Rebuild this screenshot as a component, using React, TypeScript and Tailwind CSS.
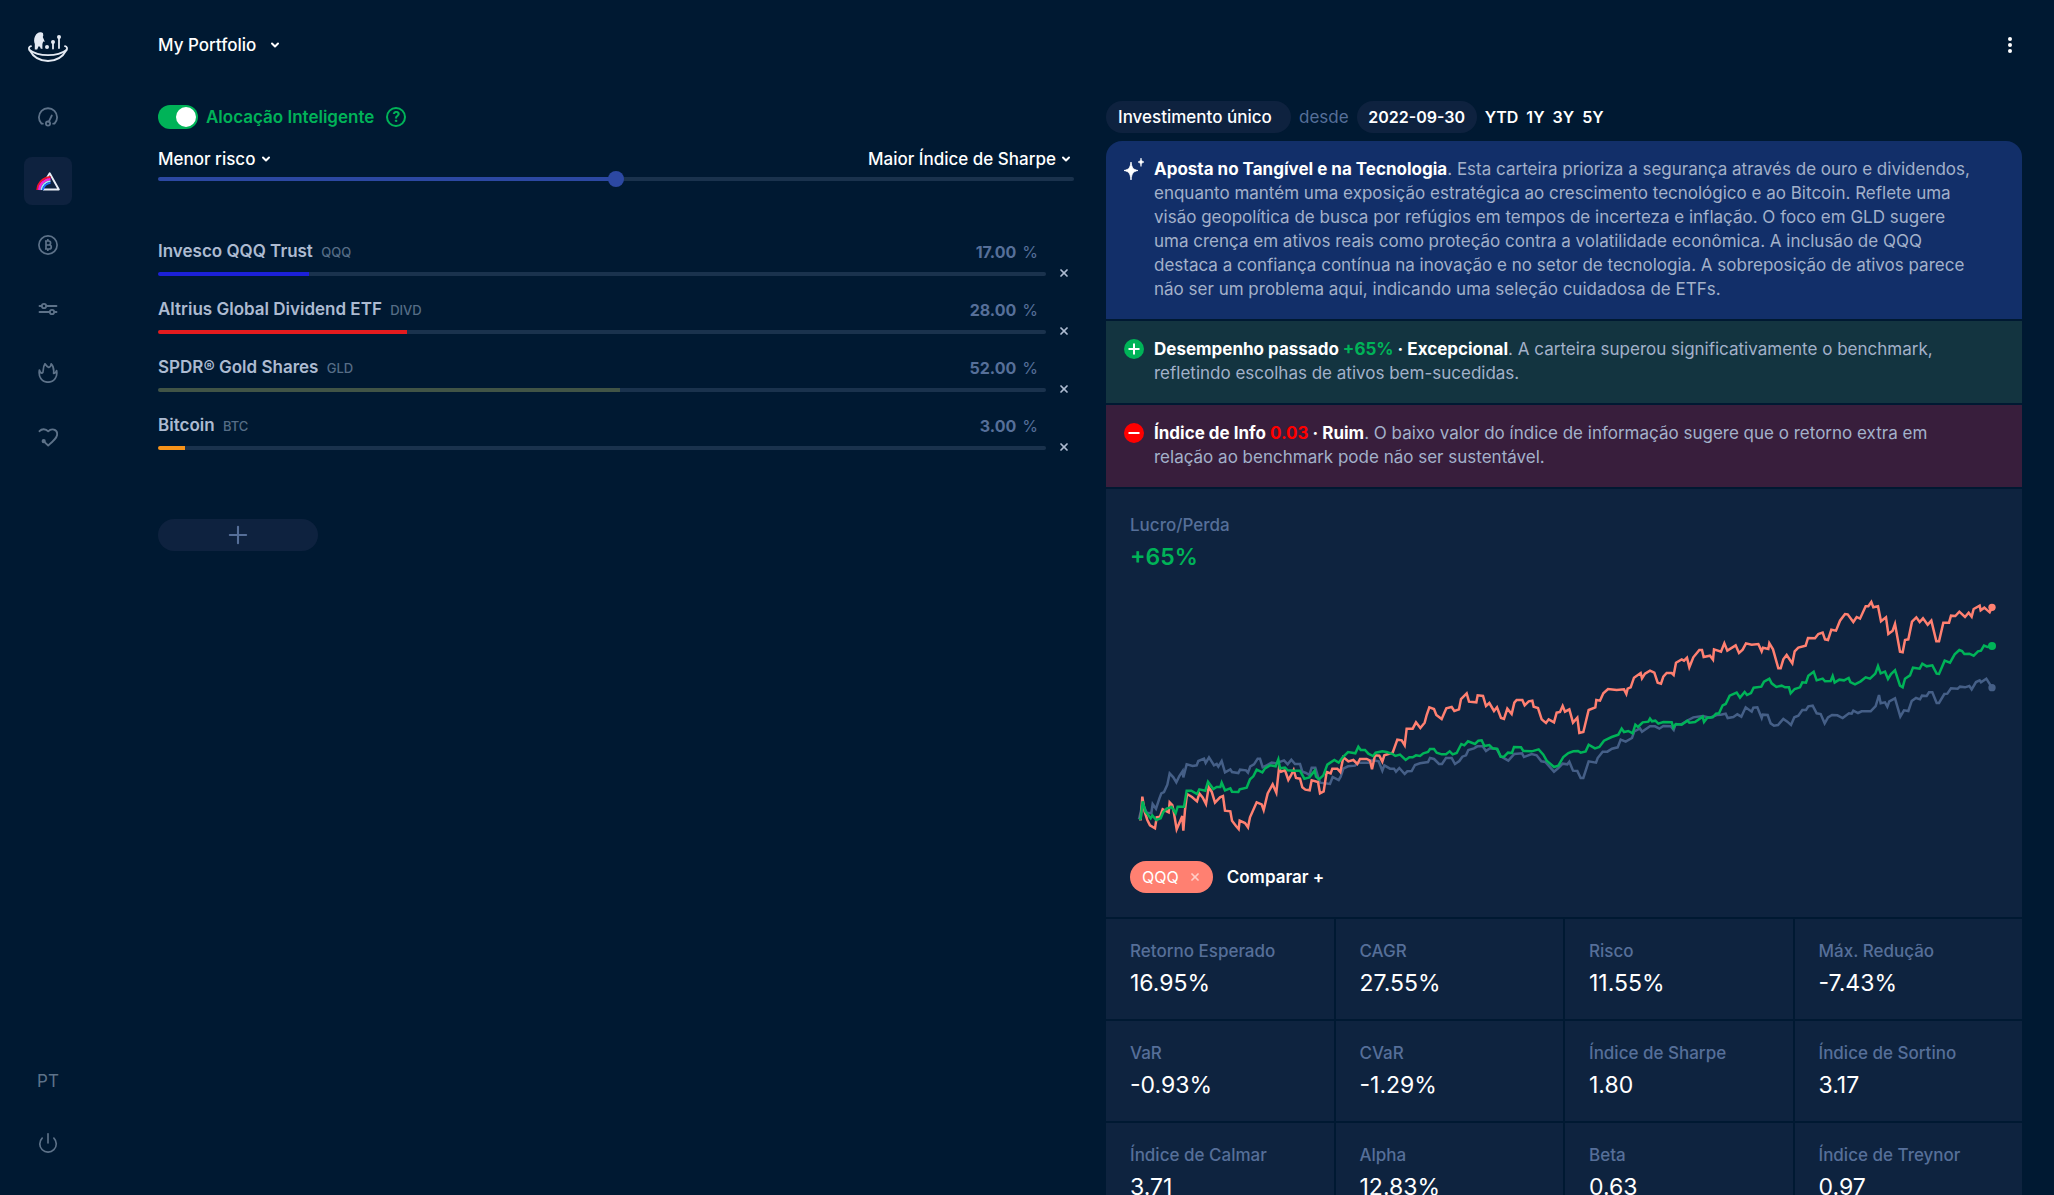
import React, { useState } from 'react';
import { ChevronDown, Plus, Power, X } from 'lucide-react';

interface Holding {
  name: string;
  ticker: string;
  weight: number;
  color: string;
}

interface Insight {
  tone: string;
  icon: React.ReactNode;
  title: React.ReactNode;
  text: string;
}

const INITIAL_HOLDINGS: Holding[] = [
  { name: 'Invesco QQQ Trust', ticker: 'QQQ', weight: 17, color: '#1c20d8' },
  { name: 'Altrius Global Dividend ETF', ticker: 'DIVD', weight: 28, color: '#e31b1e' },
  { name: 'SPDR® Gold Shares', ticker: 'GLD', weight: 52, color: '#415446' },
  { name: 'Bitcoin', ticker: 'BTC', weight: 3, color: '#f7931a' },
];

const METRICS = [
  { label: 'Retorno Esperado', value: '16.95%' },
  { label: 'CAGR', value: '27.55%' },
  { label: 'Risco', value: '11.55%' },
  { label: 'Máx. Redução', value: '-7.43%' },
  { label: 'VaR', value: '-0.93%' },
  { label: 'CVaR', value: '-1.29%' },
  { label: 'Índice de Sharpe', value: '1.80' },
  { label: 'Índice de Sortino', value: '3.17' },
  { label: 'Índice de Calmar', value: '3.71' },
  { label: 'Alpha', value: '12.83%' },
  { label: 'Beta', value: '0.63' },
  { label: 'Índice de Treynor', value: '0.97' },
];

// Chart series, weekly closes
const QQQ_LINE =
  '57,718 62,718 67,650 74,695 82,720 90,736 105,745 110,712 120,710 128,688 146,697 149,667 157,675 162,700 170,748 187,708 190,752 195,690 201,642 216,651 231,664 238,640 248,652 258,672 266,622 275,635 285,668 300,652 309,648 315,692 331,694 336,722 348,738 356,747 359,722 375,729 384,742 390,712 410,667 425,673 431,690 443,640 458,613 469,638 477,565 483,575 495,571 505,600 512,588 521,570 528,594 540,596 547,622 556,629 569,631 575,601 594,606 600,640 611,634 620,576 632,580 637,566 652,566 661,576 670,532 685,544 700,540 712,552 720,537 740,537 750,542 756,568 765,526 778,527 787,545 793,526 818,518 832,479 845,481 854,496 860,446 878,446 888,427 901,444 914,428 920,405 928,382 942,387 949,405 965,417 979,385 995,381 1003,393 1017,388 1023,357 1040,340 1047,365 1069,367 1073,346 1089,348 1098,378 1108,369 1122,393 1131,382 1143,414 1152,417 1162,386 1175,402 1183,368 1190,360 1207,360 1214,376 1226,364 1237,362 1241,380 1254,384 1265,418 1278,429 1286,418 1302,427 1310,398 1320,396 1328,378 1335,395 1348,388 1359,428 1372,413 1378,459 1390,456 1406,390 1426,382 1429,360 1440,362 1450,340 1464,327 1490,330 1512,328 1519,342 1523,326 1532,322 1542,293 1562,279 1566,295 1575,281 1590,272 1603,278 1613,308 1623,311 1630,290 1640,279 1655,279 1661,285 1668,248 1685,238 1692,242 1701,233 1708,262 1720,232 1738,210 1746,210 1751,231 1770,227 1779,239 1782,208 1803,215 1813,190 1822,212 1847,196 1857,219 1868,209 1878,190 1895,194 1915,192 1925,214 1929,203 1945,207 1948,190 1959,208 1975,265 1982,265 1990,238 2000,225 2017,250 2024,214 2035,203 2057,197 2064,174 2085,175 2095,162 2108,158 2115,178 2124,180 2134,149 2148,152 2160,122 2175,102 2183,103 2200,126 2210,111 2220,116 2237,79 2245,79 2254,66 2260,82 2274,79 2283,124 2298,112 2305,162 2318,152 2325,132 2340,215 2348,217 2355,180 2365,178 2376,125 2389,112 2399,126 2409,115 2423,134 2434,122 2449,184 2457,184 2470,128 2487,128 2493,107 2506,108 2518,95 2535,111 2546,98 2555,110 2561,87 2579,77 2582,91 2593,83 2609,97 2616,82';
const PORTFOLIO_LINE =
  '57,718 62,716 68,664 76,694 92,715 97,706 109,720 122,715 130,696 140,686 155,681 167,700 173,680 192,680 200,632 214,632 231,642 238,628 256,632 264,605 280,627 290,621 301,621 305,608 315,631 331,625 336,635 355,636 359,628 380,623 390,598 400,589 410,569 427,577 435,565 450,556 467,559 475,538 480,565 495,563 503,571 520,572 540,572 553,596 568,592 584,572 588,590 597,598 610,586 622,554 643,540 656,548 668,532 684,516 706,520 715,500 722,510 735,510 745,521 759,528 767,518 787,514 800,516 818,522 826,528 840,524 857,540 868,532 878,532 888,526 900,528 910,520 924,516 930,507 942,507 950,518 965,523 978,523 989,514 998,523 1010,519 1024,492 1033,496 1044,484 1065,492 1075,482 1085,481 1093,498 1108,495 1118,505 1132,507 1142,530 1152,530 1164,518 1176,519 1182,501 1203,502 1210,513 1235,514 1256,508 1270,524 1280,542 1302,561 1315,557 1330,531 1345,519 1360,514 1374,513 1382,518 1397,514 1406,494 1425,505 1438,501 1452,482 1475,471 1495,464 1505,446 1512,456 1525,453 1538,460 1546,434 1554,441 1568,427 1585,425 1590,416 1596,424 1606,422 1615,431 1630,426 1655,427 1660,443 1668,432 1685,434 1702,422 1708,428 1725,426 1748,410 1752,426 1762,413 1778,412 1788,401 1797,400 1808,376 1817,372 1829,347 1850,338 1860,353 1874,336 1881,345 1893,339 1901,323 1924,320 1932,305 1948,296 1955,310 1969,321 1985,317 1995,322 2007,322 2012,340 2024,327 2040,322 2047,307 2058,308 2065,287 2081,275 2090,301 2108,296 2115,304 2132,303 2138,288 2144,308 2158,299 2172,301 2186,294 2191,306 2205,313 2222,304 2237,292 2250,296 2266,281 2274,258 2282,280 2295,275 2304,297 2313,282 2325,271 2340,317 2348,322 2355,296 2370,286 2379,263 2399,266 2407,251 2420,259 2437,256 2450,281 2457,282 2474,242 2490,248 2504,223 2518,210 2526,213 2533,222 2548,221 2561,227 2574,214 2583,212 2592,197 2602,201 2616,198';
const BENCHMARK_LINE =
  '57,718 68,670 80,698 94,700 98,672 108,686 118,656 124,640 132,636 142,614 149,580 160,592 169,607 178,588 188,573 190,592 200,553 218,558 230,556 235,543 252,536 257,549 267,532 282,556 290,552 295,560 305,543 315,577 331,568 336,576 355,579 360,569 378,571 384,578 391,559 402,553 413,536 420,536 428,562 440,556 455,548 467,550 492,541 503,553 514,539 525,552 540,552 547,575 558,579 568,585 575,563 586,563 594,590 600,608 630,612 638,591 656,600 662,590 670,566 684,559 705,557 715,548 745,548 757,540 776,544 787,572 793,556 810,566 822,566 828,575 838,564 854,582 862,574 875,573 885,555 900,550 924,546 930,534 942,537 957,552 966,552 978,534 995,534 1005,552 1018,543 1027,530 1038,526 1045,510 1062,505 1072,499 1088,499 1098,513 1110,505 1130,507 1142,529 1165,542 1183,522 1206,520 1212,531 1235,522 1250,526 1264,544 1276,546 1302,575 1315,564 1328,551 1342,553 1348,545 1359,572 1372,573 1382,594 1390,594 1406,544 1428,548 1433,534 1448,515 1462,515 1476,506 1493,502 1502,479 1517,485 1536,474 1543,454 1560,445 1566,455 1590,439 1605,439 1618,446 1630,438 1652,439 1661,450 1666,434 1685,432 1705,420 1720,412 1748,408 1770,413 1790,405 1802,404 1817,401 1823,414 1840,411 1852,403 1864,410 1877,382 1895,395 1900,383 1912,382 1925,414 1928,404 1943,405 1952,430 1962,437 1974,435 1990,417 2002,425 2013,435 2023,412 2035,407 2047,390 2058,390 2065,379 2078,377 2090,400 2102,402 2114,430 2124,412 2136,405 2152,406 2168,414 2187,400 2195,401 2200,392 2214,399 2225,394 2252,394 2267,378 2277,345 2282,370 2295,367 2302,380 2308,364 2325,355 2341,410 2352,391 2365,393 2375,363 2388,354 2400,358 2406,347 2420,348 2427,337 2437,337 2450,369 2457,369 2473,342 2482,341 2493,325 2513,326 2520,320 2535,322 2548,318 2555,328 2568,306 2579,301 2583,307 2599,296 2616,323';

const LogoIcon = () => (
  <svg width="40" height="30" viewBox="0 0 40 30" fill="none" stroke="#e4eaf3" strokeLinecap="round" strokeLinejoin="round">
    <path d="M3 14.2C1 14.6.4 16.4 1.5 18C5 24.5 11.5 29 20 29s15-4.500 18.500-11c1-1.600.5-3.400-1.500-3.800" strokeWidth="1.800" />
    <path d="M1.500 18C6 21.500 12 23.200 20 23.200s14-1.700 18.500-5.200" strokeWidth="1.800" />
    <path d="M6.800 17.500V12C5.200 8.500 6.500 3 9.800 1C10.800-.1 14 0 15 1.200L15.300 3.500L14.800 5L16.800 9.800L15.200 9.400L14.400 12V17L12.600 16.400L12 14.800L10.600 14.200L9.200 17.500z" fill="#e4eaf3" stroke="none" />
    <circle cx="19" cy="15" r="2" fill="#e4eaf3" stroke="none" />
    <circle cx="25" cy="10" r="2" fill="#e4eaf3" stroke="none" />
    <circle cx="31" cy="5" r="2" fill="#e4eaf3" stroke="none" />
    <path d="M25 10v6.500M31 5v11" strokeWidth="1.800" />
  </svg>
);

const GaugeIcon = () => (
  <svg width="20" height="20" viewBox="0 0 20 20" fill="none" stroke="currentColor" strokeWidth="1.800" strokeLinecap="round">
    <path d="M4.800 16.700H3.500A9.100 9.100 0 1 1 16.500 16.700H15.200" />
    <circle cx="10" cy="16.600" r="2.100" />
    <path d="M10.800 14.600L13.800 8.500" />
  </svg>
);

const PrismIcon = () => (
  <svg width="24" height="20" viewBox="0 0 24 20" fill="none">
    <path d="M10.800 7L13.700 2.200L22.800 18.500H7" stroke="#e9eef6" strokeWidth="1.900" strokeLinejoin="round" />
    <path d="M1.200 19C1.800 11.500 7 6.500 14.500 6" stroke="#f5122b" strokeWidth="1.800" />
    <path d="M3.200 19C3.800 12.800 8.300 8.600 14.500 8" stroke="#f224dc" strokeWidth="2.600" />
    <path d="M5.300 19C6 14.200 9.300 10.800 14.500 10.200" stroke="#9de4fb" strokeWidth="1.800" />
    <path d="M6.900 19C7.600 15.200 10.600 12.400 14.500 11.800" stroke="#1d6fff" strokeWidth="1.800" />
  </svg>
);

const CoinIcon = () => (
  <svg width="20" height="20" viewBox="0 0 20 20" fill="none" stroke="currentColor" strokeWidth="1.700">
    <circle cx="10" cy="10" r="9.100" />
    <path d="M8 6v8h3.200c2.800 0 2.800-4 0-4H8.500h2.200c2.500 0 2.500-4 0-4H7M7 14h2M9.800 4v2M9.800 14v2" />
  </svg>
);

const SlidersIcon = () => (
  <svg width="20" height="20" viewBox="0 0 20 20" fill="none" stroke="currentColor" strokeWidth="1.800" strokeLinecap="round">
    <path d="M1.500 7h2M8.500 7h10M1.500 13h10M16.500 13h2" />
    <circle cx="6" cy="7" r="2.200" />
    <circle cx="14" cy="13" r="2.200" />
  </svg>
);

const FlameIcon = () => (
  <svg width="20" height="20" viewBox="0 0 20 20" fill="none" stroke="currentColor" strokeWidth="1.700" strokeLinejoin="round">
    <path d="M1.400 7C.2 13.500 3.500 19.200 10 19.200S19.800 13.500 18.600 7.500C18 9.500 17 10.300 15.600 10.300C16 6.500 15.500 3 13.200.8C13 3 12 4 10.800 4.500C9.500 3.800 8 2.500 7 .8C5.500 3 5.300 5 5.200 7.500C5.200 9 4.800 10 4 10.200C2.600 10 1.800 9 1.400 7z" />
  </svg>
);

const HeartIcon = () => (
  <svg width="20" height="20" viewBox="0 0 20 20" fill="none" stroke="currentColor" strokeWidth="1.800" strokeLinecap="round" strokeLinejoin="round">
    <path d="M1.500 4.200C3.800 1.500 7.800 1.600 10.200 4.400C13.500.8 19.200 2.500 19.200 7C19.200 11 15 14.500 10.200 18.500L6 14.600" />
    <circle cx="5.700" cy="14.200" r="1.200" fill="currentColor" />
  </svg>
);

const SparkleIcon = () => (
  <svg className="shrink-0" width="20" height="24" viewBox="0 0 20 24" fill="#fff">
    <path d="M7 5C7.900 11 9 12.500 14 13.500C9 14.500 7.900 16 7 23C6.100 16 5 14.500 0 13.500C5 12.500 6.100 11 7 5z" stroke="#fff" strokeWidth=".8" />
    <path d="M17 1C17.500 3.700 18 4.500 20 5C18 5.500 17.500 6.300 17 9.500C16.500 6.300 16 5.500 14 5C16 4.500 16.500 3.700 17 1z" stroke="#fff" strokeWidth=".6" />
  </svg>
);

const BadgeIcon: React.FC<{ positive?: boolean }> = ({ positive }) => (
  <svg className="mt-0.5 shrink-0" width="20" height="20" viewBox="0 0 20 20">
    <circle cx="10" cy="10" r="10" fill={positive ? '#00b358' : '#ff0000'} />
    <path d={positive ? 'M4.500 10h11M10 4.500v11' : 'M4.500 10h11'} stroke="#fff" strokeWidth="2" />
  </svg>
);

const NAV = [
  { label: 'Painel', icon: <GaugeIcon /> },
  { label: 'Portfolio', icon: <PrismIcon />, active: true },
  { label: 'Cripto', icon: <CoinIcon /> },
  { label: 'Ajustes', icon: <SlidersIcon /> },
  { label: 'Tendências', icon: <FlameIcon /> },
  { label: 'Favoritos', icon: <HeartIcon /> },
];

const INSIGHTS: Insight[] = [
  {
    tone: 'bg-[#122f69]',
    icon: <SparkleIcon />,
    title: 'Aposta no Tangível e na Tecnologia',
    text: `Esta carteira prioriza a segurança através de ouro e dividendos,
enquanto mantém uma exposição estratégica ao crescimento tecnológico e ao Bitcoin. Reflete uma
visão geopolítica de busca por refúgios em tempos de incerteza e inflação. O foco em GLD sugere
uma crença em ativos reais como proteção contra a volatilidade econômica. A inclusão de QQQ
destaca a confiança contínua na inovação e no setor de tecnologia. A sobreposição de ativos parece
não ser um problema aqui, indicando uma seleção cuidadosa de ETFs.`,
  },
  {
    tone: 'bg-[#133440]',
    icon: <BadgeIcon positive />,
    title: <>Desempenho passado <span className="text-[#00b358]">+65%</span> · Excepcional</>,
    text: `A carteira superou significativamente o benchmark,
refletindo escolhas de ativos bem-sucedidas.`,
  },
  {
    tone: 'bg-[#381e3c]',
    icon: <BadgeIcon />,
    title: <>Índice de Info <span className="text-[#ff0000]">0.03</span> · Ruim</>,
    text: `O baixo valor do índice de informação sugere que o retorno extra em
relação ao benchmark pode não ser sustentável.`,
  },
];

const Sidebar = () => (
  <aside className="flex h-screen w-24 shrink-0 flex-col items-center pb-7 pt-8 text-[#5d7289]">
    <a href="#home" aria-label="Início"><LogoIcon /></a>
    <nav className="mt-[31px] flex flex-col gap-4">
      {NAV.map(item => (
        <a
          key={item.label}
          href={`#${item.label}`}
          aria-label={item.label}
          className={`flex h-12 w-12 items-center justify-center rounded-lg ${item.active ? 'bg-[#0e223f]' : ''}`}
        >
          {item.icon}
        </a>
      ))}
    </nav>
    <div className="mt-auto flex flex-col items-center gap-3.5">
      <button className="h-12 w-12">PT</button>
      <button aria-label="Sair" className="flex h-12 w-12 items-center justify-center"><Power size={22} strokeWidth={1.800} /></button>
    </div>
  </aside>
);

const Picker: React.FC<{ label: string; value: string; gap?: string }> = ({ label, value, gap = 'gap-1' }) => (
  <label className={`flex items-center font-medium text-white ${gap}`}>
    <select aria-label={label} className="appearance-none bg-transparent outline-none">
      <option>{value}</option>
    </select>
    <ChevronDown size={12} strokeWidth={4} />
  </label>
);

const HoldingRow: React.FC<{ holding: Holding; onChange: (weight: number) => void; onRemove: () => void }> = ({ holding, onChange, onRemove }) => {
  const fill = `linear-gradient(to right, ${holding.color} ${holding.weight}%, #1a324d ${holding.weight}%)`;

  return (
    <li className="flex h-[58px] items-start gap-2">
      <div className="flex grow flex-col gap-2">
        <div className="flex items-center justify-between pr-2">
          <label htmlFor={holding.ticker} className="font-semibold text-[#adbbd1]">
            {holding.name} <span className="ml-1 text-[13px] font-medium text-[#566d86]">{holding.ticker}</span>
          </label>
          <span className="flex gap-1.5 text-base text-[#566f99]"><b>{holding.weight.toFixed(2)}</b> <span>%</span></span>
        </div>
        <input
          id={holding.ticker}
          type="range"
          value={holding.weight}
          onChange={e => onChange(Number(e.target.value))}
          className="h-1 w-full appearance-none rounded-full [&::-webkit-slider-thumb]:w-0 [&::-webkit-slider-thumb]:appearance-none"
          style={{ background: fill }}
        />
      </div>
      <button aria-label={`Remover ${holding.name}`} onClick={onRemove} className="mt-6 p-1 text-[#adbbd1]">
        <X size={12} strokeWidth={3.500} />
      </button>
    </li>
  );
};

const Chart = () => (
  <svg className="block w-full" viewBox="30 -21 2604 864" fill="none" strokeWidth="7.500" role="img" aria-label="Lucro/Perda">
    <polyline points={BENCHMARK_LINE} stroke="#455f87" />
    <circle cx="2616" cy="323" r="11" fill="#455f87" />
    <polyline points={QQQ_LINE} stroke="#ff8071" />
    <circle cx="2616" cy="82" r="11" fill="#ff8071" />
    <polyline points={PORTFOLIO_LINE} stroke="#00b358" />
    <circle cx="2616" cy="198" r="12" fill="#00b358" />
  </svg>
);

const App: React.FC = () => {
  const [holdings, setHoldings] = useState(INITIAL_HOLDINGS);
  const [balance, setBalance] = useState(50);

  const setWeight = (ticker: string, weight: number) =>
    setHoldings(prev => prev.map(h => (h.ticker === ticker ? { ...h, weight } : h)));

  return (
    <div className="flex h-screen overflow-hidden bg-[#001932] font-['Inter',sans-serif] text-[17px] leading-6">
      <Sidebar />

      <div className="flex grow flex-col pl-[62px] pr-8">
        <header className="flex h-[90px] shrink-0 items-center justify-between">
          <Picker label="Carteira" value="My Portfolio" gap="gap-3" />
          <button aria-label="Mais opções" className="flex flex-col items-center gap-0.5 px-2.5">
            <span className="h-1 w-1 rounded-full bg-white" />
            <span className="h-1 w-1 rounded-full bg-white" />
            <span className="h-1 w-1 rounded-full bg-white" />
          </button>
        </header>

        <main className="grid grid-cols-2 gap-8 pt-[11px]">
          {/* Allocation */}
          <section>
            <div className="flex h-8 items-center gap-2 font-semibold text-[#00b358]">
              <input
                id="smart"
                type="checkbox"
                role="switch"
                defaultChecked
                className="h-6 w-10 appearance-none rounded-full bg-[#1a324d] p-0.5 before:block before:h-5 before:w-5 before:rounded-full before:bg-white checked:bg-[#00b358] checked:pl-[18px]"
              />
              <label htmlFor="smart">Alocação Inteligente</label>
              <button aria-label="Ajuda" className="ml-1 h-5 w-5 rounded-full border-2 border-[#00b358] text-sm font-bold leading-4">?</button>
            </div>

            <div className="mt-3.5 flex justify-between pr-0.5">
              <Picker label="Objetivo mínimo" value="Menor risco" />
              <Picker label="Objetivo máximo" value="Maior Índice de Sharpe" />
            </div>
            <input
              type="range"
              aria-label="Equilíbrio"
              value={balance}
              onChange={e => setBalance(Number(e.target.value))}
              className="mt-1.5 block h-1 w-full appearance-none rounded-full [&::-webkit-slider-thumb]:h-4 [&::-webkit-slider-thumb]:w-4 [&::-webkit-slider-thumb]:appearance-none [&::-webkit-slider-thumb]:rounded-full [&::-webkit-slider-thumb]:bg-[#2c48a2]"
              style={{ background: `linear-gradient(to right, #2c48a2 ${balance}%, #1a324d ${balance}%)` }}
            />

            <ul className="mt-[58px]">
              {holdings.map(h => (
                <HoldingRow
                  key={h.ticker}
                  holding={h}
                  onChange={weight => setWeight(h.ticker, weight)}
                  onRemove={() => setHoldings(prev => prev.filter(p => p.ticker !== h.ticker))}
                />
              ))}
            </ul>

            <button aria-label="Adicionar ativo" className="mt-12 flex h-8 w-40 items-center justify-center rounded-full bg-[#0e223f] text-[#566f99]">
              <Plus size={28} strokeWidth={1.800} />
            </button>
          </section>

          {/* Results */}
          <section>
            <div className="flex h-8 items-center gap-2 font-medium text-white">
              <select aria-label="Tipo de investimento" className="h-8 w-[185px] appearance-none rounded-full bg-[#0e223f] px-3">
                <option>Investimento único</option>
              </select>
              <label htmlFor="since" className="font-normal text-[#566f99]">desde</label>
              <input id="since" defaultValue="2022-09-30" className="h-8 w-[120px] rounded-full bg-[#0e223f] text-center text-base font-semibold" />
              {['YTD', '1Y', '3Y', '5Y'].map(period => (
                <button key={period} className="text-base font-semibold">{period}</button>
              ))}
            </div>

            <div className="mt-2 flex flex-col gap-0.5 overflow-hidden rounded-t-2xl">
              {INSIGHTS.map(item => (
                <div key={item.tone} className={`flex gap-2.5 pb-[18px] pl-[18px] pr-5 pt-4 ${item.tone}`}>
                  {item.icon}
                  <p className="whitespace-pre-line text-[#a3b1ca]"><b className="font-bold text-white">{item.title}</b>. {item.text}</p>
                </div>
              ))}

              <div className="bg-[#0e233f] p-6">
                <h2 className="font-medium text-[#566f99]">Lucro/Perda</h2>
                <div className="mt-1 text-[23px] font-semibold leading-8 text-[#00b358]">+65%</div>
                <Chart />
                <div className="flex items-center gap-3.5 text-white">
                  <button className="flex h-8 items-center gap-2.5 rounded-full bg-[#ff8071] px-3 text-base">
                    QQQ <X size={12} strokeWidth={3.500} className="opacity-60" />
                  </button>
                  <button className="font-semibold">Comparar +</button>
                </div>
              </div>

              <dl className="grid grid-cols-4 gap-0.5">
                {METRICS.map(m => (
                  <div key={m.label} className="bg-[#0e233f] px-6 py-5">
                    <dt className="font-medium text-[#566f99]">{m.label}</dt>
                    <dd className="mt-1 text-[23px] leading-8 text-white">{m.value}</dd>
                  </div>
                ))}
              </dl>
            </div>
          </section>
        </main>
      </div>
    </div>
  );
};

export default App;
